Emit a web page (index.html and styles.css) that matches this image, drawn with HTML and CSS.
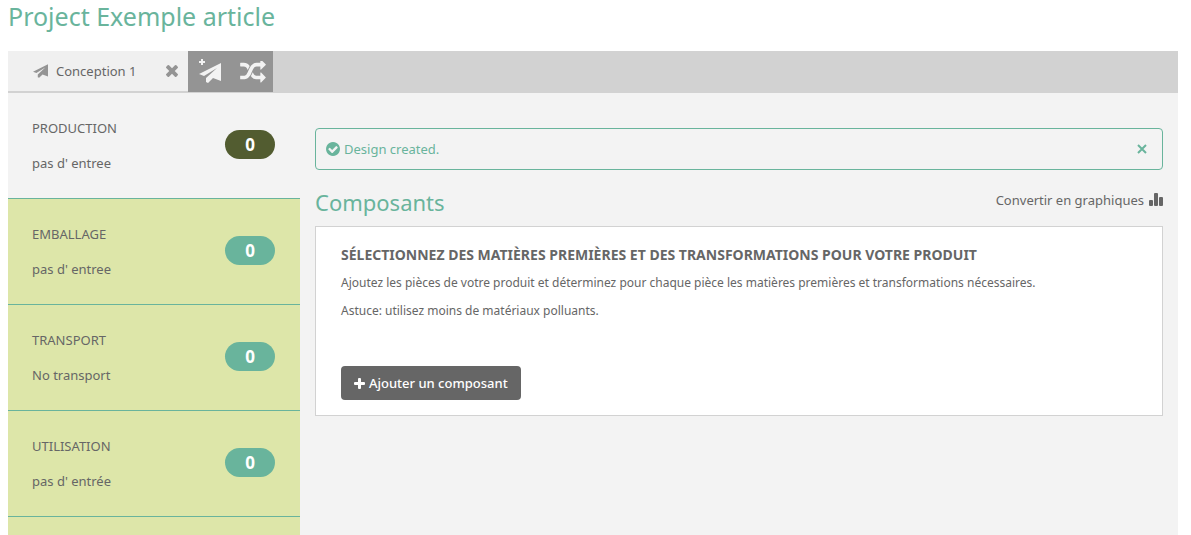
FILE: index.html
```html
<!DOCTYPE html>
<html lang="fr">
<head>
<meta charset="utf-8">
<title>Project Exemple article</title>
<link rel="stylesheet" href="styles.css">
</head>
<body>
<svg class="sprite" aria-hidden="true">
  <symbol id="plane" viewBox="0 0 22 20"><path d="M22 0v18l-8-3-5 5-2-1v-4L18 5 5 13l-5-2z"/></symbol>
  <symbol id="times" viewBox="302 366 1188 1188"><path d="M1490 1322q0 40-28 68l-136 136q-28 28-68 28t-68-28l-294-294-294 294q-28 28-68 28t-68-28l-136-136q-28-28-28-68t28-68l294-294-294-294q-28-28-28-68t28-68l136-136q28-28 68-28t68 28l294 294 294-294q28-28 68-28t68 28l136 136q28 28 28 68t-28 68l-294 294 294 294q28 28 28 68z"/></symbol>
  <symbol id="random" viewBox="0 128 1792 1536"><path d="M666 481q-60 92-137 273-22-45-37-72.500t-40.500-63.500-51-56.500-63-35-81.500-14.500h-224q-14 0-23-9t-9-23v-192q0-14 9-23t23-9h224q250 0 410 225zm1126 799q0 14-9 23l-320 320q-9 9-23 9-13 0-22.500-9.500t-9.500-22.500v-192q-32 0-85 .5t-81 1-73-1-71-5-64-10.500-63-18.500-58-28.500-59-40-55-53.500-56-69.500q59-93 136-273 22 45 37 72.500t40.500 63.500 51 56.500 63 35 81.500 14.500h256v-192q0-14 9-23t23-9q12 0 24 10l319 319q9 9 9 23zm0-896q0 14-9 23l-320 320q-9 9-23 9-13 0-22.500-9.500t-9.500-22.500v-192h-256q-48 0-87 15t-69 45-51 61.500-45 77.500q-32 62-78 171-29 66-49.500 111t-54 105-64 100-74 83-90 68.500-106.500 42-128 16.500h-224q-14 0-23-9t-9-23v-192q0-14 9-23t23-9h224q48 0 87-15t69-45 51-61.500 45-77.500q32-62 78-171 29-66 49.500-111t54-105 64-100 74-83 90-68.500 106.500-42 128-16.500h256v-192q0-14 9-23t23-9q12 0 24 10l319 319q9 9 9 23z"/></symbol>
  <symbol id="check" viewBox="128 128 1536 1536"><path d="M1412 734q0-28-18-46l-91-90q-19-19-45-19t-45 19l-408 407-226-226q-19-19-45-19t-45 19l-91 90q-18 18-18 46 0 27 18 45l362 362q19 19 45 19 27 0 46-19l543-543q18-18 18-45zm252 162q0 209-103 385.500t-279.500 279.500-385.500 103-385.500-103-279.500-279.500-103-385.500 103-385.500 279.500-279.500 385.500-103 385.500 103 279.500 279.500 103 385.500z"/></symbol>
  <symbol id="plus" viewBox="0 0 11 11"><path d="M4 1q0-1 1-1h1q1 0 1 1v3h3q1 0 1 1v1q0 1-1 1H7v3q0 1-1 1H5q-1 0-1-1V7H1Q0 7 0 6V5q0-1 1-1h3z"/></symbol>
  <symbol id="bars" viewBox="0 0 14 14"><rect y="7" width="4" height="6" rx="1"/><rect x="5" width="4" height="13" rx="1"/><rect x="10" y="4" width="4" height="9" rx="1"/></symbol>
</svg>

<h1 class="title">Project Exemple article</h1>

<div class="workspace">
  <nav class="tabs" aria-label="Conceptions">
    <div class="tab">
      <a class="tab-link" href="#conception"><svg class="icon tab-plane"><use href="#plane"/></svg>Conception 1</a>
      <button class="bare tab-close" type="button" aria-label="Fermer"><svg class="icon close-icon"><use href="#times"/></svg></button>
    </div>
    <div class="tools">
      <button class="bare tool" type="button" aria-label="Nouvelle conception">
        <svg class="icon new-plane" viewBox="0 0 24 26"><path d="M2 0h2v2h2v2H4v2H2V4H0V2h2z"/><use href="#plane" x="0" y="4" width="22" height="20"/></svg>
      </button>
      <button class="bare tool" type="button" aria-label="Comparer"><svg class="icon shuffle"><use href="#random"/></svg></button>
    </div>
  </nav>

  <div class="columns">
    <nav class="phases" aria-label="Phases">
      <a class="phase active" href="#production"><span class="phase-text"><span class="phase-name">PRODUCTION</span><span>pas d' entree</span></span><span class="count">0</span></a>
      <a class="phase" href="#emballage"><span class="phase-text"><span class="phase-name">EMBALLAGE</span><span>pas d' entree</span></span><span class="count">0</span></a>
      <a class="phase" href="#transport"><span class="phase-text"><span class="phase-name">TRANSPORT</span><span>No transport</span></span><span class="count">0</span></a>
      <a class="phase" href="#utilisation"><span class="phase-text"><span class="phase-name">UTILISATION</span><span>pas d' entrée</span></span><span class="count">0</span></a>
    </nav>

    <main class="content">
      <div class="alert" role="status">
        <svg class="icon check"><use href="#check"/></svg>
        <span class="alert-text">Design created.</span>
        <button class="bare alert-close" type="button" aria-label="Fermer"><svg class="icon alert-x" viewBox="0 0 10 10"><path d="M1 1l8 8M9 1L1 9"/></svg></button>
      </div>
      <div class="heading-row">
        <h2 class="heading">Composants</h2>
        <a class="convert" href="#graphiques">Convertir en graphiques<svg class="icon bars"><use href="#bars"/></svg></a>
      </div>
      <section class="card">
        <h3 class="card-title">SÉLECTIONNEZ DES MATIÈRES PREMIÈRES ET DES TRANSFORMATIONS POUR VOTRE PRODUIT</h3>
        <p class="card-text">Ajoutez les pièces de votre produit et déterminez pour chaque pièce les matières premières et transformations nécessaires.</p>
        <p class="card-text">Astuce: utilisez moins de matériaux polluants.</p>
        <button class="add" type="button"><svg class="icon plus"><use href="#plus"/></svg>Ajouter un composant</button>
      </section>
    </main>
  </div>
</div>
</body>
</html>
```
FILE: styles.css
```css
* { box-sizing: border-box; }

body {
  display: flex;
  flex-direction: column;
  min-height: 100vh;
  margin: 0;
  padding: 0 13px 0 8px;
  background: #fff;
  color: #666;
  font-family: "Trebuchet MS", "Noto Sans", "Open Sans", sans-serif;
  font-size: 13px;
  line-height: 20px;
}

a { color: inherit; text-decoration: none; }
.sprite { position: absolute; width: 0; height: 0; }
.icon { display: block; flex: none; fill: currentColor; }

.bare {
  display: flex;
  padding: 0;
  border: 0;
  background: none;
  color: inherit;
  cursor: pointer;
}

.title {
  margin: 0 0 19px;
  color: #69b49c;
  font-size: 25px;
  font-weight: 400;
  line-height: 32px;
}

.workspace {
  display: flex;
  flex: 1;
  flex-direction: column;
  background: #f3f3f3;
}

.tabs {
  display: flex;
  height: 42px;
  background: #d2d2d2;
}

.tab {
  display: flex;
  align-items: center;
  justify-content: space-between;
  width: 180px;
  height: 40px;
  padding: 0 10px 0 25px;
  background: #f0f0f0;
}

.tab-link { display: flex; align-items: center; gap: 8px; }
.tab-plane { width: 15px; height: 14px; color: #949494; }
.tab-close { color: #949494; }
.close-icon { width: 12px; height: 12px; }

.tools {
  display: flex;
  align-items: center;
  gap: 17px;
  height: 41px;
  padding: 0 7px 0 11px;
  background: #949494;
  color: #f3f3f3;
}

.new-plane { width: 24px; height: 26px; }
.shuffle { width: 26px; height: 22px; }

.columns { display: flex; flex: 1; }

.phases {
  flex: none;
  width: 292px;
  background: #dde6a9;
}

.phase {
  display: flex;
  align-items: center;
  justify-content: space-between;
  padding: 25px 25px 25px 24px;
  border-bottom: 1px solid #69b49c;
}

.phase.active { background: #f3f3f3; }
.phase-text { display: flex; flex-direction: column; gap: 15px; }

.count {
  width: 50px;
  margin-bottom: 3px;
  border-radius: 15px;
  background: #69b49c;
  color: #fff;
  font-size: 17px;
  font-weight: 700;
  line-height: 29px;
  text-align: center;
}

.active .count { background: #525c30; }

.content { flex: 1; padding: 35px 15px; }

.alert {
  display: flex;
  align-items: center;
  gap: 4px;
  padding: 10px 15px 10px 10px;
  border: 1px solid #69b49c;
  border-radius: 4px;
  color: #69b49c;
}

.alert-text { flex: 1; }
.check { width: 14px; height: 14px; }
.alert-x { width: 10px; height: 10px; fill: none; stroke: currentColor; stroke-width: 2; }

.heading-row {
  display: flex;
  justify-content: space-between;
  margin: 20px 0 12px;
}

.heading {
  margin: 0;
  color: #69b49c;
  font-size: 22px;
  font-weight: 400;
  line-height: 24px;
}

.convert { display: flex; align-items: center; gap: 5px; height: 20px; }
.bars { width: 14px; height: 14px; }

.card {
  padding: 18px 25px 15px;
  border: 1px solid #d2d2d2;
  background: #fff;
}

.card-title { margin: 0 0 8px; font-size: 14px; font-weight: 700; }
.card-text { margin: 0 0 8px; font-size: 12px; }

.add {
  display: flex;
  align-items: center;
  gap: 4px;
  margin-top: 45px;
  padding: 7px 13px;
  border: 0;
  border-radius: 4px;
  background: #666;
  color: #fff;
  font: inherit;
  font-weight: 500;
  cursor: pointer;
}

.plus { width: 11px; height: 11px; }
```
